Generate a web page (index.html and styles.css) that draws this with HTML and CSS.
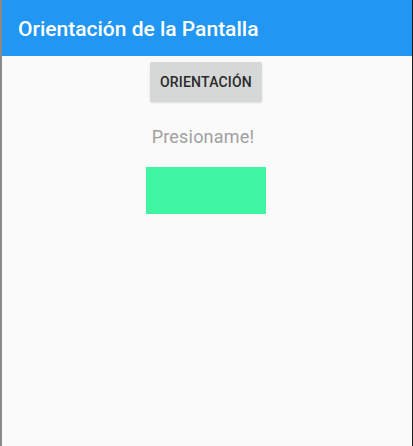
FILE: index.html
```html
<!DOCTYPE html>
<html lang="es">
<head>
<meta charset="utf-8">
<link rel="stylesheet" href="styles.css">
</head>
<body>
<div class="frame">
  <header class="appbar"><h1 class="title">Orientación de la Pantalla</h1></header>
  <main class="content">
    <button class="btn">ORIENTACIÓN</button>
    <p class="hint">Presioname!</p>
    <div class="box"></div>
  </main>
</div>
</body>
</html>
```
FILE: styles.css
```css
html, body { margin: 0; padding: 0; }
body {
  width: 413px;
  height: 446px;
  overflow: hidden;
  font-family: Roboto, "Noto Sans", sans-serif;
}
.frame {
  box-sizing: border-box;
  width: 413px;
  height: 446px;
  border-left: 2px solid #8a8a8a;
  border-right: 1px solid #1a1a1a;
  background: #fafafa;
  display: flex;
  flex-direction: column;
}
.appbar {
  height: 56px;
  background: #2196f3;
  display: flex;
  align-items: center;
  padding-left: 16px;
  flex-shrink: 0;
}
.title {
  margin: 0;
  color: #fff;
  font-size: 21px;
  font-weight: 500;
  line-height: 24px;
  padding-top: 1px;
}
.content {
  display: flex;
  flex-direction: column;
  align-items: center;
  padding-top: 6px;
  padding-right: 2px;
}
.btn {
  width: 112px;
  height: 40px;
  border: none;
  border-radius: 2px;
  background: #d6d7d7;
  color: #2a2a2a;
  font-family: Roboto, sans-serif;
  font-size: 14px;
  font-weight: 500;
  letter-spacing: 0.2px;
  box-shadow: 0 1px 2px rgba(0,0,0,0.12);
  padding: 0;
}
.hint {
  margin: 22px 6px 0 0;
  color: #a0a0a0;
  font-size: 18px;
  letter-spacing: 0.2px;
  line-height: 26px;
}
.box {
  margin-top: 17px;
  width: 120px;
  height: 47px;
  background: #3ff5a1;
}
```
